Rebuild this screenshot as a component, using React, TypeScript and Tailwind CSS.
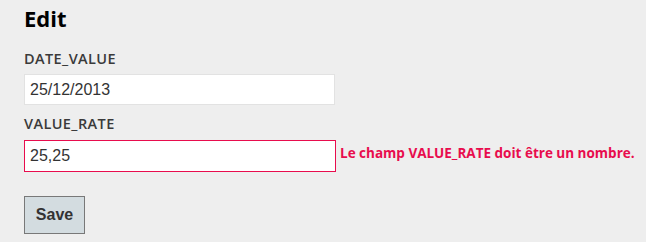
export default function App() {
  return (
    <div className="min-h-screen bg-[#eeeeee] px-6 pt-[3px] font-['Open_Sans',sans-serif] text-[#333]">
      <h2 className="text-[22px] leading-[30px] font-bold text-black">Edit</h2>

      <form className="flex flex-col items-start">
        <label className="mt-[16px] text-[14.5px] leading-[20px] font-semibold tracking-[0.4px] text-[#3a3a3a]">
          DATE_VALUE
        </label>
        <input
          defaultValue="25/12/2013"
          className="mt-[5px] h-[31px] w-[311px] border border-[#e2e2e2] bg-white px-[5px] font-['Liberation_Sans',Arial,sans-serif] text-[16px] text-[#333] outline-none"
        />

        <label className="mt-[9px] text-[14.5px] leading-[20px] font-semibold tracking-[0.4px] text-[#3a3a3a]">
          VALUE_RATE
        </label>
        <div className="mt-[6px] flex items-start">
          <input
            defaultValue="25,25"
            className="h-[32px] w-[312px] shrink-0 border border-[#e80c4d] bg-white px-[5px] font-['Liberation_Sans',Arial,sans-serif] text-[16px] text-[#333] outline-none"
          />
          <span className="ml-[4px] whitespace-nowrap pt-[4px] text-[13.5px] leading-[18px] font-bold text-[#e80c4d]">
            Le champ VALUE_RATE doit être un nombre.
          </span>
        </div>

        <button
          type="button"
          className="mt-[24px] h-[38px] w-[61px] border border-[#787878] bg-[#d3dce0] font-['Liberation_Sans',Arial,sans-serif] text-[16px] font-bold text-[#333]"
        >
          Save
        </button>
      </form>
    </div>
  );
}
